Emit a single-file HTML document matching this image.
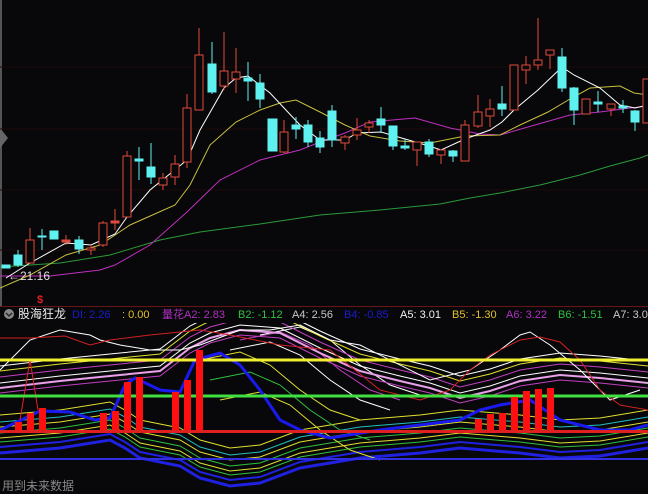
<!DOCTYPE html>
<html><head><meta charset="utf-8"><style>
html,body{margin:0;padding:0;background:#08080a;}
svg{display:block}
text{font-family:"Liberation Sans","Noto Sans CJK SC",sans-serif;}
</style></head><body>
<svg width="648" height="494" viewBox="0 0 648 494" xmlns="http://www.w3.org/2000/svg">
<rect width="648" height="494" fill="#08080a"/>
<rect x="0" y="0" width="2" height="306" fill="#555"/>
<polygon points="0,128 8,138 0,148" fill="#666"/>
<g stroke="#1e0a0c" stroke-width="1">
<line x1="0" y1="67" x2="648" y2="67"/><line x1="0" y1="129" x2="648" y2="129"/>
<line x1="0" y1="190" x2="648" y2="190"/><line x1="0" y1="250" x2="648" y2="250"/>
</g>
<g fill="none" stroke-width="1">
<polyline stroke="#2a9a3a" points="0,267 60,263 110,255 160,240 200,232 260,224 320,215 380,210 440,204 470,198 500,193 540,185 580,175 610,166 640,158 648,155"/>
<polyline stroke="#c030c0" points="0,276 50,276 100,270 115,265 150,245 187,212 220,180 260,160 300,150 320,142 345,133 370,122 415,118 450,128 480,134 500,135 535,125 570,115 600,112 630,108 648,106"/>
<polyline stroke="#c8c040" points="0,288 30,275 66,255 100,245 130,225 175,205 190,185 210,145 236,122 260,110 280,103 296,100 320,112 345,125 370,136 400,141 430,143 465,136 500,135 520,125 548,112 570,99 590,88 620,86 634,93 648,95"/>
<polyline stroke="#ffffff" points="6,278 30,263 66,243 91,245 115,234 127,217 150,190 187,160 200,130 224,88 236,78 248,76 270,93 300,125 320,140 345,140 357,133 381,132 405,139 429,146 441,150 465,139 490,130 502,122 514,110 538,90 562,67 574,75 600,88 620,105 635,108 648,105"/>
</g>
<g stroke-width="1" shape-rendering="crispEdges">
<g stroke="#e04a3a" fill="#08080a">
<line x1="30" y1="228" x2="30" y2="263"/><rect x="26" y="240" width="8" height="23"/>
<line x1="66" y1="235" x2="66" y2="245"/><rect x="62" y="240" width="8" height="2" fill="#e04a3a"/>
<line x1="91" y1="245" x2="91" y2="255"/><rect x="87" y="248" width="8" height="2"/>
<line x1="103" y1="221" x2="103" y2="247"/><rect x="99" y="223" width="8" height="22"/>
<line x1="115" y1="209" x2="115" y2="230"/><rect x="111" y="221" width="8" height="2" fill="#e04a3a"/>
<line x1="127" y1="151" x2="127" y2="217"/><rect x="123" y="156" width="8" height="61"/>
<line x1="163" y1="173" x2="163" y2="190"/><rect x="159" y="178" width="8" height="7"/>
<line x1="175" y1="155" x2="175" y2="185"/><rect x="171" y="164" width="8" height="13"/>
<line x1="187" y1="94" x2="187" y2="168"/><rect x="183" y="108" width="8" height="54"/>
<line x1="199" y1="28" x2="199" y2="110"/><rect x="195" y="55" width="8" height="55"/>
<line x1="224" y1="32" x2="224" y2="90"/><rect x="220" y="71" width="8" height="15"/>
<line x1="236" y1="48" x2="236" y2="93"/><rect x="232" y="72" width="8" height="7"/>
<line x1="284" y1="120" x2="284" y2="153"/><rect x="280" y="132" width="8" height="20"/>
<line x1="345" y1="135" x2="345" y2="150"/><rect x="341" y="137" width="8" height="6"/>
<line x1="357" y1="118" x2="357" y2="140"/><rect x="353" y="130" width="8" height="5"/>
<line x1="369" y1="120" x2="369" y2="133"/><rect x="365" y="123" width="8" height="4"/>
<line x1="417" y1="142" x2="417" y2="166"/><rect x="413" y="142" width="8" height="8"/>
<line x1="441" y1="150" x2="441" y2="164"/><rect x="437" y="150" width="8" height="5"/>
<line x1="465" y1="120" x2="465" y2="161"/><rect x="461" y="125" width="8" height="36"/>
<line x1="478" y1="95" x2="478" y2="128"/><rect x="474" y="112" width="8" height="14"/>
<line x1="490" y1="99" x2="490" y2="127"/><rect x="486" y="109" width="8" height="7"/>
<rect x="510" y="65" width="8" height="45"/>
<line x1="526" y1="56" x2="526" y2="84"/><rect x="522" y="65" width="8" height="5"/>
<line x1="538" y1="18" x2="538" y2="70"/><rect x="534" y="60" width="8" height="5"/>
<line x1="550" y1="50" x2="550" y2="69"/><rect x="546" y="50" width="8" height="5"/>
<rect x="582" y="99" width="8" height="15"/>
<line x1="611" y1="104" x2="611" y2="116"/><rect x="607" y="104" width="8" height="5"/>
<rect x="643" y="79" width="8" height="44"/>
</g>
<g stroke="#5ff0f0" fill="#5ff0f0">
<rect x="2" y="265" width="8" height="3"/>
<line x1="18" y1="250" x2="18" y2="267"/><rect x="14" y="255" width="8" height="10"/>
<line x1="42" y1="229" x2="42" y2="250"/><rect x="38" y="236" width="8" height="1"/>
<rect x="50" y="231" width="8" height="8"/>
<line x1="79" y1="236" x2="79" y2="254"/><rect x="75" y="240" width="8" height="9"/>
<line x1="139" y1="147" x2="139" y2="180"/><rect x="135" y="159" width="8" height="2"/>
<line x1="151" y1="143" x2="151" y2="184"/><rect x="147" y="167" width="8" height="10"/>
<line x1="212" y1="42" x2="212" y2="94"/><rect x="208" y="64" width="8" height="28"/>
<line x1="248" y1="62" x2="248" y2="101"/><rect x="244" y="78" width="8" height="3"/>
<line x1="260" y1="74" x2="260" y2="108"/><rect x="256" y="83" width="8" height="16"/>
<rect x="268" y="119" width="9" height="32"/>
<line x1="296" y1="117" x2="296" y2="139"/><rect x="292" y="125" width="8" height="4"/>
<line x1="308" y1="120" x2="308" y2="147"/><rect x="304" y="125" width="8" height="17"/>
<line x1="320" y1="131" x2="320" y2="153"/><rect x="316" y="138" width="8" height="9"/>
<line x1="332" y1="105" x2="332" y2="147"/><rect x="328" y="111" width="8" height="29"/>
<line x1="381" y1="107" x2="381" y2="133"/><rect x="377" y="119" width="8" height="6"/>
<line x1="393" y1="126" x2="393" y2="150"/><rect x="389" y="126" width="8" height="20"/>
<line x1="405" y1="139" x2="405" y2="150"/><rect x="401" y="146" width="8" height="2"/>
<line x1="429" y1="139" x2="429" y2="157"/><rect x="425" y="142" width="8" height="12"/>
<line x1="453" y1="150" x2="453" y2="162"/><rect x="449" y="151" width="8" height="5"/>
<line x1="502" y1="86" x2="502" y2="116"/><rect x="498" y="104" width="8" height="5"/>
<line x1="562" y1="48" x2="562" y2="92"/><rect x="558" y="57" width="8" height="31"/>
<line x1="574" y1="87" x2="574" y2="125"/><rect x="570" y="88" width="8" height="22"/>
<line x1="598" y1="91" x2="598" y2="112"/><rect x="594" y="102" width="8" height="2"/>
<line x1="623" y1="100" x2="623" y2="113"/><rect x="619" y="106" width="8" height="2"/>
<line x1="635" y1="110" x2="635" y2="131"/><rect x="631" y="111" width="8" height="11"/>
</g>
</g>
<text x="8" y="280" fill="#ddd" font-size="12">←21.16</text>
<text x="37" y="303" fill="#e02020" font-size="11" font-weight="bold">$</text>
<defs>
<polyline id="up" fill="none" points="0,385 60,378 120,372 160,368 190,345 210,335 240,327 280,330 320,350 360,368 400,378 430,385 460,395 490,388 520,378 560,372 600,375 648,380"/>
<polyline id="lo" fill="none" points="0,445 60,440 110,432 125,440 140,450 180,458 200,470 230,478 260,475 300,460 360,450 420,445 460,440 520,445 560,450 600,448 648,440"/>
<polyline id="fall" fill="none" points="200,340 240,332 270,345 300,370 330,390 360,400"/>
</defs>
<g stroke-width="1">
<use href="#lo" stroke="#2020e0" stroke-width="3" transform="translate(0,8)"/>
<use href="#lo" stroke="#2020e0" stroke-width="2" transform="translate(0,2)"/>
<use href="#lo" stroke="#30c040" transform="translate(0,-3)"/>
<use href="#lo" stroke="#e0e030" transform="translate(0,-7)"/>
<use href="#lo" stroke="#30c040" transform="translate(0,-12)"/>
<use href="#lo" stroke="#e0e030" transform="translate(0,-18)"/>
<use href="#lo" stroke="#20c0c0" transform="translate(0,-23)"/>
<use href="#lo" stroke="#e0e030" transform="translate(0,-30)"/>
<use href="#fall" stroke="#e0e030" transform="translate(0,20)"/>
<use href="#fall" stroke="#30c040" transform="translate(10,40)"/>
<use href="#fall" stroke="#e0e030" transform="translate(20,60)"/>
<use href="#fall" stroke="#ffffff" transform="translate(30,10)"/>
<use href="#fall" stroke="#c040c0" transform="translate(40,0)"/>
<use href="#fall" stroke="#ffffff" transform="translate(60,-5)"/>
<use href="#up" stroke="#c040c0" transform="translate(0,8)"/>
<use href="#up" stroke="#e8a0e8" stroke-width="2" transform="translate(0,3)"/>
<use href="#up" stroke="#ffffff" transform="translate(0,-2)"/>
<use href="#up" stroke="#c040c0" transform="translate(0,-8)"/>
<use href="#up" stroke="#e0e030" transform="translate(0,-14)"/>
<use href="#up" stroke="#ffffff" transform="translate(0,-19)"/>
</g>
<polyline fill="none" stroke="#ffffff" points="0,370 30,340 60,330 90,335 100,340 120,345 150,350 180,350 200,345 240,330 270,330 300,325 330,340 360,345 430,380 470,370 500,350 520,335 530,332 550,345 580,370 610,400 640,390"/>
<polyline fill="none" stroke="#d02020" points="0,338 30,338 65,336 90,345 110,340 150,335 200,330 230,335 280,345 330,350 380,390 420,400 450,390 470,370 490,355 520,340 540,337 560,342 580,360 600,390 620,405 648,410"/>
<polyline fill="none" stroke="#1a1af0" stroke-width="3" points="0,430 40,411 70,412 95,420 110,418 125,385 135,378 160,390 180,392 195,360 220,353 240,365 260,390 280,420 300,430 330,438 380,430 420,425 460,420 480,410 500,405 530,400 560,420 600,430 630,430 648,425"/>
<polyline fill="none" stroke="#e02020" points="20,420 30,360 38,410"/>
<rect x="0" y="358.5" width="648" height="3" fill="#f0f030"/>
<rect x="0" y="394.5" width="648" height="3" fill="#40e040"/>
<rect x="0" y="458" width="648" height="2" fill="#3030e0"/>
<g fill="#ff1010">
<rect x="15" y="422" width="7" height="9"/><rect x="27" y="413" width="7" height="18"/><rect x="39" y="408" width="7" height="23"/>
<rect x="100" y="413" width="7" height="18"/><rect x="112" y="411" width="7" height="20"/><rect x="124" y="382" width="7" height="49"/>
<rect x="136" y="377" width="7" height="54"/><rect x="172" y="392" width="7" height="39"/><rect x="184" y="380" width="7" height="51"/>
<rect x="196" y="350" width="7" height="81"/>
<rect x="475" y="419" width="7" height="12"/><rect x="487" y="414" width="7" height="17"/><rect x="499" y="413" width="7" height="18"/>
<rect x="511" y="397" width="7" height="34"/><rect x="523" y="391" width="7" height="40"/><rect x="535" y="389" width="7" height="42"/>
<rect x="547" y="388" width="7" height="43"/>
</g>
<rect x="0" y="430" width="648" height="3" fill="#e02020"/>
<text x="2" y="490" fill="#888" font-size="12">用到未来数据</text>
<!-- header on top -->
<rect x="0" y="307" width="648" height="16" fill="#08080a"/>
<line x1="0" y1="306.5" x2="648" y2="306.5" stroke="#6a1515"/>
<circle cx="9" cy="314" r="5" fill="#888"/>
<polyline points="6,313 9,316 12,313" fill="none" stroke="#222" stroke-width="1.3"/>
<g font-size="11">
<text x="18" y="318" fill="#e8e8e8" font-size="12">股海狂龙</text>
<text x="72" y="318" fill="#1a1ad0">DI: 2.26</text>
<text x="122" y="318" fill="#e0c030">: 0.00</text>
<text x="162" y="318" fill="#b030c0">量花A2: 2.83</text>
<text x="238" y="318" fill="#30c040">B2: -1.12</text>
<text x="292" y="318" fill="#c8c8c8">A4: 2.56</text>
<text x="344" y="318" fill="#1a1ad0">B4: -0.85</text>
<text x="400" y="318" fill="#f0f0f0">A5: 3.01</text>
<text x="452" y="318" fill="#e0c030">B5: -1.30</text>
<text x="506" y="318" fill="#b030c0">A6: 3.22</text>
<text x="558" y="318" fill="#30c040">B6: -1.51</text>
<text x="613" y="318" fill="#c8c8c8">A7: 3.0</text>
</g>
</svg>
</body></html>
